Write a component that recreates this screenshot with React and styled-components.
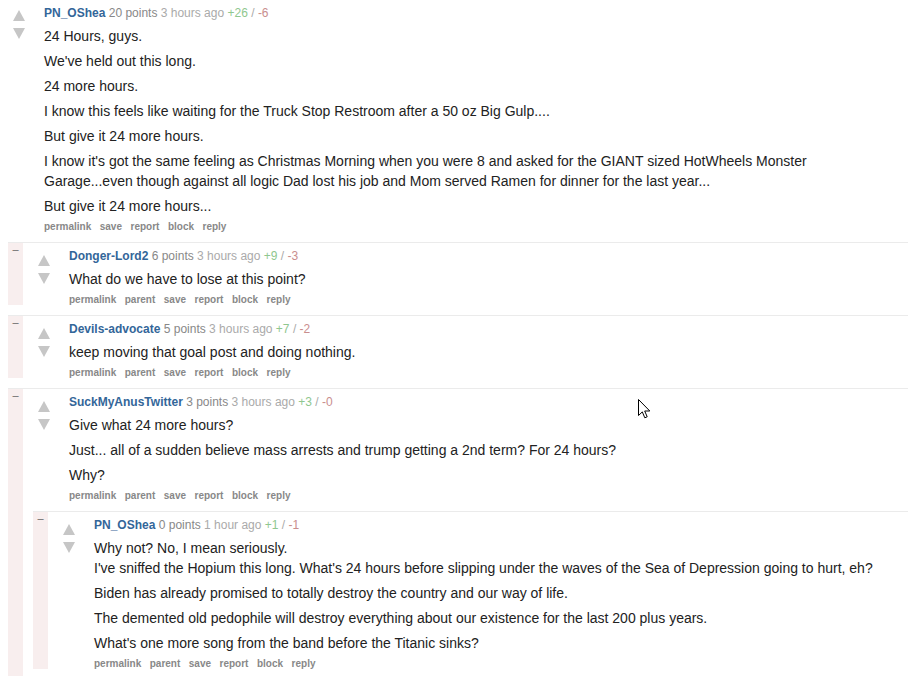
import React from "react";
import styled, { createGlobalStyle } from "styled-components";

const Global = createGlobalStyle`
  html, body { margin: 0; padding: 0; background: #fff; }
  body { font-family: "Liberation Sans", Arial, sans-serif; overflow: hidden; }
`;

const Page = styled.div`
  width: 908px;
  height: 676px;
  overflow: hidden;
  position: relative;
`;

const Box = styled.div`
  display: flex;
  border-top: ${(p) => (p.$top ? "none" : "1px solid #ebebeb")};
  margin-bottom: ${(p) => (p.$top ? "0" : "10px")};
  background: #fff;
`;

const Collapse = styled.div`
  width: 15px;
  flex-shrink: 0;
  background: #f8eeee;
  color: #666;
  font-size: 11px;
  line-height: 11px;
  padding-top: 1px;
  text-align: center;
  user-select: none;
`;

const Area = styled.div`
  flex: 1;
  min-width: 0;
  display: flex;
  flex-direction: column;
`;

const Entry = styled.div`
  display: flex;
  padding-top: 6px;
`;

const Votes = styled.div`
  width: 12px;
  flex-shrink: 0;
  margin: ${(p) => (p.$top ? "4px 19px 0 13px" : "6px 19px 0 15px")};
  display: flex;
  flex-direction: column;
  gap: 7px;
`;

const Content = styled.div`
  flex: 1;
  min-width: 0;
`;

const Tagline = styled.div`
  font-size: 12px;
  line-height: 15px;
  color: #888;
  white-space: nowrap;
`;

const Author = styled.a`
  color: #369;
  font-weight: bold;
  text-decoration: none;
`;

const Time = styled.span`
  color: #aaa;
`;

const Score = styled.span`
  color: ${(p) => p.$color};
`;

const Body = styled.div`
  max-width: 60em;
  font-size: 14px;
  line-height: 20px;
  color: #222;
  p { margin: 5px 0; }
`;

const Buttons = styled.ul`
  list-style: none;
  margin: 0;
  padding: 0;
  display: flex;
  gap: 8.5px;
  font-size: 10px;
  line-height: 11px;
  font-weight: bold;
  color: #888;
`;

const Children = styled.div`
  display: flex;
  flex-direction: column;
  margin: 10px 0 0 ${(p) => (p.$top ? "8px" : "10px")};
`;

const Cursor = styled.svg`
  position: absolute;
  left: 638px;
  top: 399px;
`;

const Arrow = ({ down }) => (
  <svg width="12" height="11" viewBox="0 0 12 11">
    <polygon points={down ? "0,0 12,0 6,11" : "6,0 12,11 0,11"} fill="#c6c6c6" />
  </svg>
);

const Comment = ({ c, top }) => (
  <Box $top={top}>
    {!top && <Collapse>–</Collapse>}
    <Area>
      <Entry>
        <Votes $top={top}>
          <Arrow />
          <Arrow down />
        </Votes>
        <Content>
          <Tagline>
            <Author>{c.author}</Author> {c.points} <Time>{c.time}</Time>{" "}
            <Score $color="#8fc78f">{c.up}</Score> <Time>/</Time>{" "}
            <Score $color="#c98e8e">{c.down}</Score>
          </Tagline>
          <Body>
            {c.body.map((p, i) => (
              <p key={i}>
                {Array.isArray(p)
                  ? p.map((l, j) => (
                      <React.Fragment key={j}>
                        {j > 0 && <br />}
                        {l}
                      </React.Fragment>
                    ))
                  : p}
              </p>
            ))}
          </Body>
          <Buttons>
            {(top
              ? ["permalink", "save", "report", "block", "reply"]
              : ["permalink", "parent", "save", "report", "block", "reply"]
            ).map((b) => (
              <li key={b}>{b}</li>
            ))}
          </Buttons>
        </Content>
      </Entry>
      {c.children && (
        <Children $top={top}>
          {c.children.map((ch, i) => (
            <Comment key={i} c={ch} />
          ))}
        </Children>
      )}
    </Area>
  </Box>
);

const data = {
  author: "PN_OShea",
  points: "20 points",
  time: "3 hours ago",
  up: "+26",
  down: "-6",
  body: [
    "24 Hours, guys.",
    "We've held out this long.",
    "24 more hours.",
    "I know this feels like waiting for the Truck Stop Restroom after a 50 oz Big Gulp....",
    "But give it 24 more hours.",
    "I know it's got the same feeling as Christmas Morning when you were 8 and asked for the GIANT sized HotWheels Monster Garage...even though against all logic Dad lost his job and Mom served Ramen for dinner for the last year...",
    "But give it 24 more hours...",
  ],
  children: [
    {
      author: "Donger-Lord2",
      points: "6 points",
      time: "3 hours ago",
      up: "+9",
      down: "-3",
      body: ["What do we have to lose at this point?"],
    },
    {
      author: "Devils-advocate",
      points: "5 points",
      time: "3 hours ago",
      up: "+7",
      down: "-2",
      body: ["keep moving that goal post and doing nothing."],
    },
    {
      author: "SuckMyAnusTwitter",
      points: "3 points",
      time: "3 hours ago",
      up: "+3",
      down: "-0",
      body: [
        "Give what 24 more hours?",
        "Just... all of a sudden believe mass arrests and trump getting a 2nd term? For 24 hours?",
        "Why?",
      ],
      children: [
        {
          author: "PN_OShea",
          points: "0 points",
          time: "1 hour ago",
          up: "+1",
          down: "-1",
          body: [
            [
              "Why not? No, I mean seriously.",
              "I've sniffed the Hopium this long. What's 24 hours before slipping under the waves of the Sea of Depression going to hurt, eh?",
            ],
            "Biden has already promised to totally destroy the country and our way of life.",
            "The demented old pedophile will destroy everything about our existence for the last 200 plus years.",
            "What's one more song from the band before the Titanic sinks?",
          ],
        },
      ],
    },
  ],
};

export default function App() {
  return (
    <Page>
      <Global />
      <Comment c={data} top />
      <Cursor width="13" height="21" viewBox="0 0 13 21">
        <path
          d="M0.5 0.5 L0.5 16.5 L4.3 12.9 L6.8 18.8 L9.2 17.8 L6.7 12 L11.8 12 Z"
          fill="#fff"
          stroke="#000"
          strokeWidth="1"
          strokeLinejoin="round"
        />
      </Cursor>
    </Page>
  );
}
